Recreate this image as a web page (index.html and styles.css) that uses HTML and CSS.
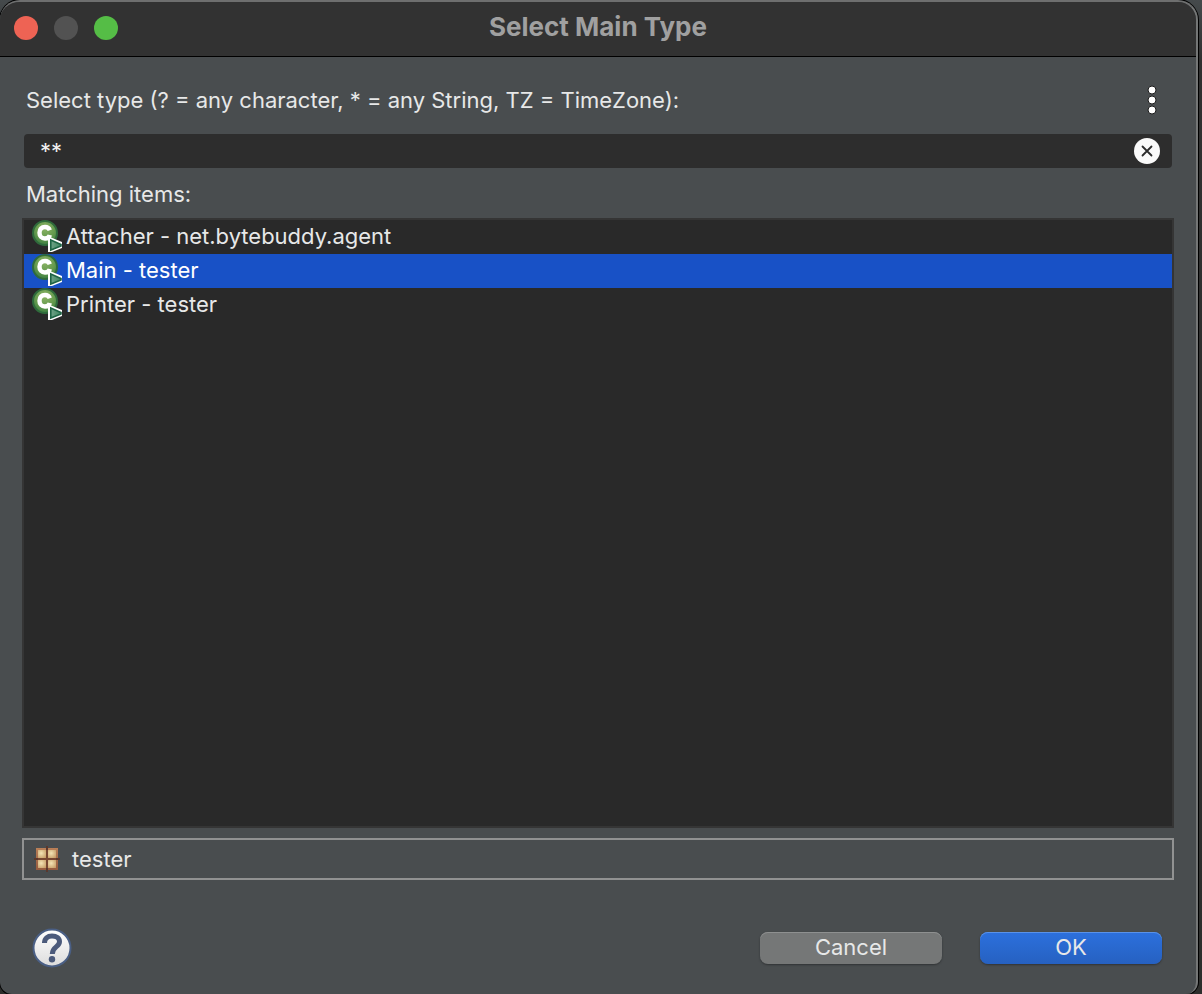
FILE: index.html
```
<!DOCTYPE html>
<html lang="en">
<head>
<meta charset="utf-8">
<title>Select Main Type</title>
<link rel="stylesheet" href="styles.css">
</head>
<body>
<svg class="symbols" aria-hidden="true">
  <defs>
    <radialGradient id="class-green" cx="0.5" cy="0.3" r="0.7">
      <stop offset="0" stop-color="#8db466"/>
      <stop offset="0.6" stop-color="#649a4d"/>
      <stop offset="1" stop-color="#3c7e42"/>
    </radialGradient>
    <linearGradient id="run-green" x1="0" x2="1">
      <stop offset="0" stop-color="#6fa287"/>
      <stop offset="1" stop-color="#3f8661"/>
    </linearGradient>
    <symbol id="class-icon" viewBox="0 0 30 32">
      <circle cx="13" cy="13" r="12" fill="url(#class-green)" stroke="#2f6b3c" stroke-width="2"/>
      <path d="M17.800 10.200C17 8 15.500 7 13 7C9.500 7 7.500 9.300 7.500 12.700S9.500 18.500 13 18.500C15.500 18.500 17.300 17.300 17.800 15" fill="none" stroke="#fff" stroke-width="4.400"/>
      <path d="M16 17.500H19L30 22V28L20 32H16Z" fill="#fff"/>
      <path d="M18.800 20L29 24.500V26L18.800 30Z" fill="url(#run-green)" stroke="#1f6546" stroke-width="1.600"/>
    </symbol>
  </defs>
</svg>
<main class="dialog">
  <header class="titlebar">
    <div class="lights">
      <button class="light light-close" aria-label="Close"></button>
      <button class="light light-minimize" aria-label="Minimize" disabled></button>
      <button class="light light-zoom" aria-label="Zoom"></button>
    </div>
    <h1 class="title">Select Main Type</h1>
  </header>
  <div class="content">
    <div class="prompt">
      <label for="pattern">Select type (? = any character, * = any String, TZ = TimeZone):</label>
      <button class="menu" aria-label="Menu">
        <svg width="10" height="30" viewBox="0 0 10 30">
          <g fill="#fff" stroke="#1c1c1c" stroke-width="1">
            <circle cx="5" cy="5" r="4"/><circle cx="5" cy="15" r="4"/><circle cx="5" cy="25" r="4"/>
          </g>
        </svg>
      </button>
    </div>
    <div class="search">
      <input id="pattern" class="pattern" type="text" value="**">
      <button class="clear" aria-label="Clear">
        <svg width="26" height="26" viewBox="0 0 26 26">
          <circle cx="13" cy="13" r="13" fill="#fafafa"/>
          <path d="M8.500 8.500L17.500 17.500M17.500 8.500L8.500 17.500" stroke="#2c2c2c" stroke-width="1.800" stroke-linecap="round"/>
        </svg>
      </button>
    </div>
    <h2 class="caption" id="matches">Matching items:</h2>
    <ul class="list" role="listbox" aria-labelledby="matches">
      <li class="item" role="option" aria-selected="false"><svg class="item-icon"><use href="#class-icon"/></svg>Attacher - net.bytebuddy.agent</li>
      <li class="item item-selected" role="option" aria-selected="true"><svg class="item-icon"><use href="#class-icon"/></svg>Main - tester</li>
      <li class="item" role="option" aria-selected="false"><svg class="item-icon"><use href="#class-icon"/></svg>Printer - tester</li>
    </ul>
    <div class="status">
      <svg width="26" height="26" viewBox="0 0 26 26">
        <defs>
          <linearGradient id="box" x1="0" y1="0" x2="0" y2="1">
            <stop offset="0" stop-color="#b97f57"/><stop offset="1" stop-color="#955b3f"/>
          </linearGradient>
          <radialGradient id="cell" cx="0.4" cy="0.4" r="0.75">
            <stop offset="0" stop-color="#f3e3b4"/><stop offset="1" stop-color="#c69d67"/>
          </radialGradient>
        </defs>
        <rect x="2" y="2" width="22" height="22" fill="url(#box)"/>
        <g fill="url(#cell)">
          <rect x="4" y="4" width="8" height="8"/><rect x="14" y="4" width="8" height="8"/>
          <rect x="4" y="14" width="8" height="8"/><rect x="14" y="14" width="8" height="8"/>
        </g>
        <path d="M13 0V26M0 13H26" stroke="#5a382d" stroke-width="2"/>
        <path d="M13 4V22M4 13H22" stroke="#774631" stroke-width="2"/>
      </svg>
      <span>tester</span>
    </div>
    <footer class="footer">
      <button class="help" aria-label="Help">
        <svg width="40" height="40" viewBox="0 0 40 40">
          <defs>
            <linearGradient id="help-face" x1="0" y1="0" x2="0" y2="1">
              <stop offset="0" stop-color="#fff"/><stop offset="1" stop-color="#dcdcdc"/>
            </linearGradient>
          </defs>
          <circle cx="20" cy="20" r="18.500" fill="url(#help-face)" stroke="#4a5f85" stroke-width="2"/>
          <path d="M12.500 15C12.500 10.500 15.500 8 20 8C24.500 8 27.500 10.300 27.500 13.800C27.500 19 20.300 18.500 20.300 26" fill="none" stroke="#4b5a7b" stroke-width="5"/>
          <circle cx="20" cy="31.200" r="3.200" fill="#4b5a7b"/>
        </svg>
      </button>
      <div class="actions">
        <button class="button">Cancel</button>
        <button class="button button-default">OK</button>
      </div>
    </footer>
  </div>
</main>
</body>
</html>
```
FILE: styles.css
```
* {
  box-sizing: border-box;
}

body {
  margin: 0;
  min-height: 100vh;
  display: flex;
  padding-right: 4px;
  background: linear-gradient(#454a4c 0, #303030 60px, #2d2e2c 100%);
  color: #e7e8e8;
  font: 22px/28px Inter, "Liberation Sans", sans-serif;
}

button {
  margin: 0;
  padding: 0;
  border: 0;
  background: none;
  color: inherit;
  font: inherit;
}

svg {
  display: block;
  flex: none;
}

.symbols {
  position: absolute;
  width: 0;
  height: 0;
}

.dialog {
  flex: 1;
  display: flex;
  flex-direction: column;
  border-top: 2px solid #6e6f6f;
  border-right: 2px solid #747676;
  border-radius: 20px 20px 12px 12px;
  background: #494d4f;
  box-shadow: 0 0 0 1px #000;
  overflow: hidden;
}

.titlebar {
  display: grid;
  grid-template-columns: 1fr auto 1fr;
  align-items: center;
  height: 55px;
  padding: 0 14px 2px;
  border-bottom: 1px solid #000;
  background: #323232;
}

.lights {
  display: flex;
  gap: 16px;
}

.light {
  width: 24px;
  height: 24px;
  border-radius: 50%;
}

.light-close {
  background: #ee6354;
}

.light-minimize {
  background: #525252;
}

.light-zoom {
  background: #55bd46;
}

.title {
  margin: 0;
  padding-bottom: 2px;
  color: #a0a0a0;
  font-size: 26px;
  font-weight: 700;
}

.content {
  flex: 1;
  display: flex;
  flex-direction: column;
  padding: 27px 22px 26px;
}

.prompt {
  display: flex;
  align-items: center;
  justify-content: space-between;
  height: 32px;
  padding: 0 17px 0 4px;
}

.search {
  display: flex;
  align-items: center;
  height: 34px;
  margin: 18px 2px 0;
  padding: 0 12px 0 16px;
  border-radius: 4px;
  background: #2d2d2d;
}

.pattern {
  flex: 1;
  min-width: 0;
  height: 34px;
  padding: 0;
  border: 0;
  outline: 0;
  background: none;
  color: #f0f0f0;
  font: inherit;
}

.caption {
  margin: 12px 4px 10px;
  font-size: 22px;
  font-weight: 400;
}

.list {
  flex: 1;
  margin: 0;
  padding: 0;
  border: 2px solid #353535;
  background: #292929;
  list-style: none;
}

.item {
  display: flex;
  align-items: flex-start;
  gap: 4px;
  height: 34px;
  padding-left: 8px;
  line-height: 32px;
}

.item-icon {
  width: 30px;
  height: 32px;
}

.item-selected {
  background: #1851c6;
  color: #fff;
}

.status {
  display: flex;
  align-items: center;
  gap: 12px;
  height: 42px;
  margin-top: 10px;
  padding-left: 10px;
  border: 2px solid #919292;
}

.footer {
  display: flex;
  align-items: center;
  justify-content: space-between;
  margin-top: 48px;
  padding: 0 12px 0 10px;
}

.actions {
  display: flex;
  gap: 38px;
}

.button {
  width: 182px;
  height: 32px;
  padding-bottom: 3px;
  border-radius: 8px;
  background: #757777;
  box-shadow: inset 0 1px #8e9090, 0 1px 2px #303335;
}

.button-default {
  background: linear-gradient(#2c70dd, #2661c1);
  box-shadow: inset 0 1px #5a92e8, 0 1px 2px #303335;
}
```
